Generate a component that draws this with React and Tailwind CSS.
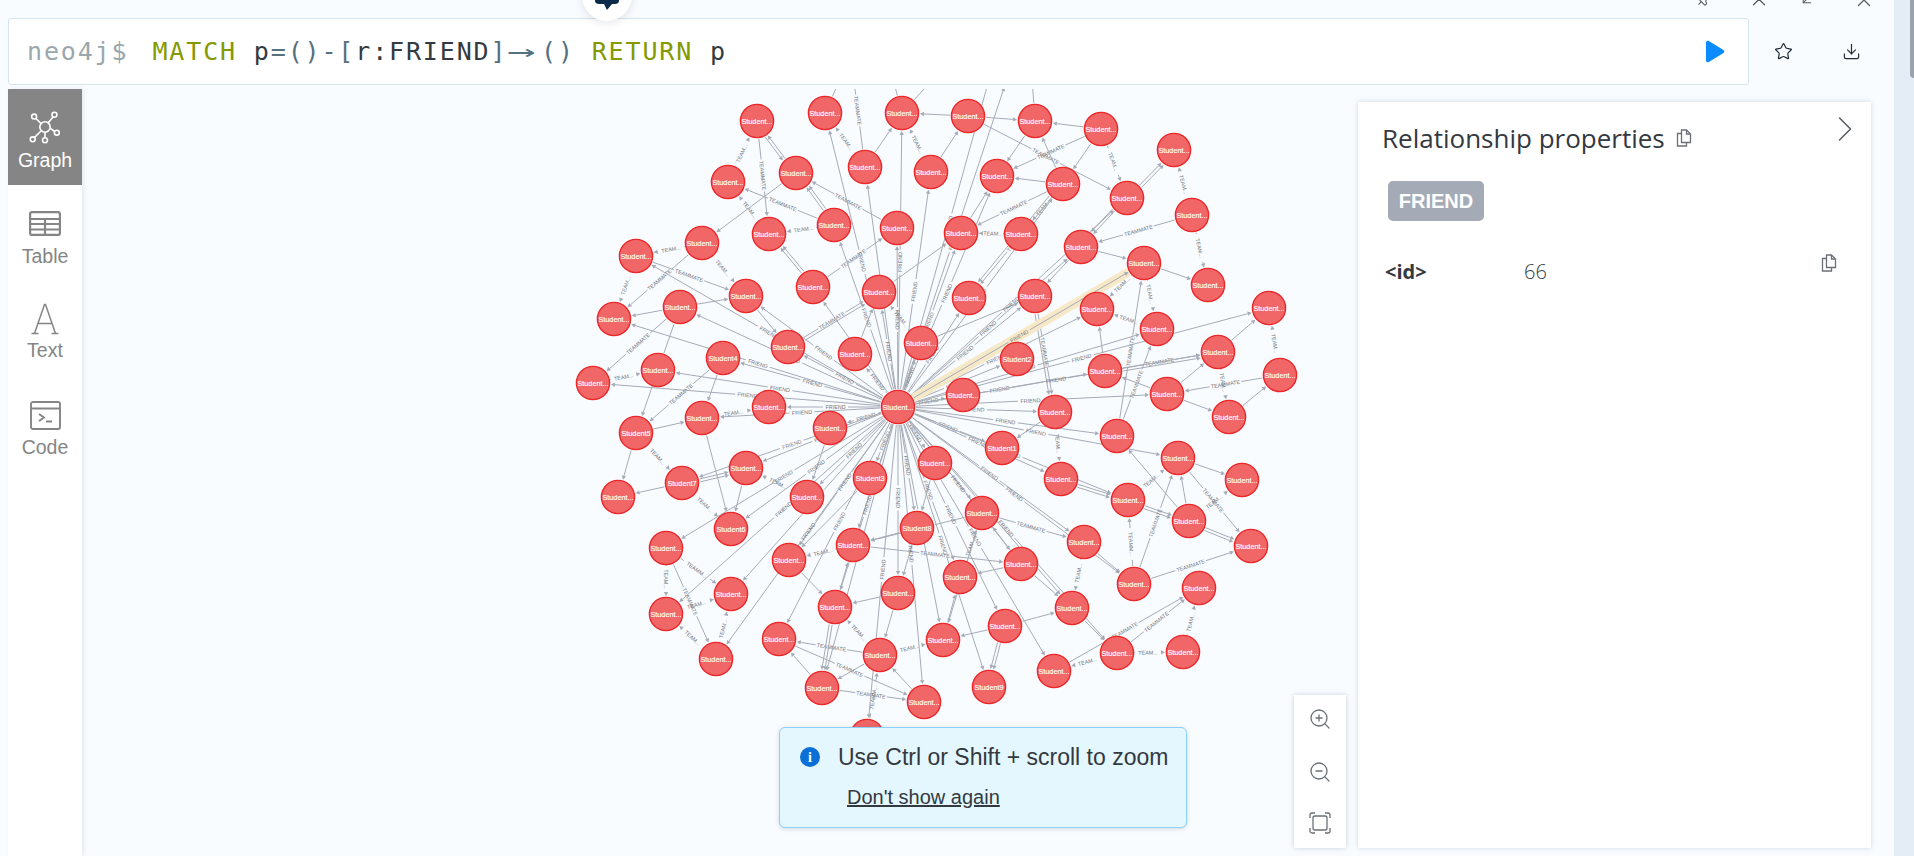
import { Star, Download, ZoomIn, ZoomOut, ChevronRight, ChevronUp, X, Pin, ArrowDownLeft } from "lucide-react";

// node centres in page pixels, [x, y, caption]
const NODES = [
  [898, 407], [757, 121], [825, 113], [902, 113], [968, 116], [1035, 121], [1101, 129], [1174, 150],
  [728, 182], [796, 173], [865, 167], [931, 172], [997, 176], [1063, 184], [1127, 198], [1192, 215],
  [769, 234], [834, 225], [897, 228], [961, 233], [1021, 234], [1081, 247], [1144, 263], [1208, 285],
  [636, 256], [702, 243], [746, 296], [813, 287], [879, 292], [969, 298], [1035, 296], [1097, 309],
  [1157, 329], [1269, 308], [614, 319], [680, 307], [788, 347], [855, 354], [921, 343], [963, 395],
  [593, 383], [658, 370], [723, 358, "Student4"], [769, 407], [702, 418], [830, 428], [636, 433, "Student5"],
  [1017, 359, "Student2"], [1218, 352], [1105, 371], [1280, 375], [1167, 394], [1229, 417], [1055, 412],
  [1117, 436], [746, 468], [682, 483, "Student7"], [618, 497], [807, 497], [870, 478, "Student3"], [935, 463],
  [731, 529, "Student6"], [917, 528, "Student8"], [666, 548], [789, 560], [853, 545], [960, 577], [731, 594],
  [898, 593], [835, 607], [666, 614], [779, 639], [943, 640], [716, 659], [880, 655], [822, 688], [924, 702],
  [867, 736], [1002, 448, "Student1"], [1178, 458], [1242, 480], [1061, 479], [1128, 500], [1189, 521],
  [1251, 546], [982, 513], [1084, 542], [1021, 564], [1134, 584], [1199, 588], [1072, 608], [1005, 626],
  [1117, 653], [1183, 652], [1054, 671], [989, 687, "Student9"],
  // above the fold, only their edges show
  [850, 50], [862, 30], [960, 50], [880, 30], [1030, 50], [1000, 40], [1010, 70],
];

const HUB_EDGES = [
  2, 3, 10, 11, 12, 17, 18, 19, 13, 14, 21, 26, 24, 27, 28, 29, 30, 31, 36, 37, 38, 35, 34, 40, 41, 42, 43, 44,
  45, 39, 47, 49, 53, 51, 78, 81, 82, 54, 79, 33, 32, 48, 55, 56, 58, 59, 60, 61, 62, 63, 64, 65, 66, 67, 68, 69,
  70, 71, 72, 73, 75, 76, 85, 86, 87, 88, 90, 91, 92, 94, 95, 77, 102, 101,
];

// [from, to, offset]: an edge with an offset has no caption drawn
const TEAM_EDGES = [
  [8, 1], [1, 16], [9, 1, 0], [1, 9, 3], [17, 9, 0], [17, 9, 3], [17, 8], [16, 8], [9, 25, 0], [17, 16], [18, 9],
  [10, 2], [10, 3, 0], [11, 3], [4, 3, 0], [10, 96], [2, 97, 0], [3, 98, 0], [3, 99, 0], [5, 100, 0], [11, 4, 0],
  [25, 24], [24, 34], [25, 34], [24, 26], [25, 26], [35, 26, 0], [35, 34, 0], [35, 46], [35, 40], [40, 41],
  [42, 44, 0], [42, 46], [44, 43], [46, 44, 0], [36, 28], [27, 18], [27, 16, 0], [27, 16, 3], [26, 36, 0],
  [36, 28, 3], [28, 19, 0], [37, 28, 0], [38, 28], [38, 30, 0], [4, 5, 0], [6, 5, 0], [6, 13, 0], [4, 14], [6, 14],
  [6, 12], [13, 5, 0], [5, 12, 0], [14, 7, 0], [14, 7, 3], [15, 7], [15, 21], [15, 23], [22, 23, 0], [21, 22, 0],
  [22, 31], [22, 32], [32, 31], [13, 19], [13, 20], [19, 12, 0], [13, 12, 0], [13, 29], [13, 29, 3], [20, 19],
  [14, 21, 0], [14, 21, 3], [21, 30, 0], [49, 31, 0], [54, 22], [54, 32], [49, 48], [49, 48, 3], [51, 48, 0],
  [48, 52], [48, 33, 0], [50, 33], [50, 51], [52, 50, 0], [30, 53], [30, 53, 3], [51, 49, 0], [51, 52, 0],
  [53, 78, 0], [53, 81], [81, 82, 0], [81, 82, 3], [82, 83, 0], [82, 83, 3], [83, 84, 0], [83, 84, 3], [79, 80, 0],
  [82, 79], [79, 84], [83, 79, 0], [83, 80], [83, 54, 0], [88, 82], [88, 79], [88, 84], [86, 88, 0], [86, 90],
  [85, 86], [87, 90, 0], [91, 90, 0], [90, 92, 0], [92, 94], [92, 93], [93, 89], [94, 89], [92, 89], [91, 95, 0],
  [91, 95, 3], [87, 85, 0], [46, 57, 0], [46, 56], [56, 57, 0], [56, 55, 0], [56, 55, 3], [56, 61], [55, 61, 0],
  [44, 61, 0], [58, 55], [45, 58, 0], [63, 67], [63, 70], [63, 73], [70, 67], [73, 67], [73, 70], [74, 71], [75, 71, 0],
  [74, 75, 0], [74, 69], [69, 65, 0], [65, 64], [62, 65, 0], [75, 76], [71, 76], [77, 74], [74, 72], [76, 74, 0],
  [69, 75, 0], [69, 75, 3], [85, 72, 0], [87, 66, 0], [66, 85], [72, 66, 0], [91, 72, 0], [85, 65], [65, 87],
  [64, 69, 0], [68, 69, 0], [68, 74, 0], [59, 64, 0], [60, 62, 0], [62, 68, 0],
];

const teamLabel = (len) => {
  if (len < 75) return "TEAM...";
  if (len < 85) return "TEAMM...";
  return "TEAMMATE";
};

// trims a line to the node rims, leaves a gap for the caption, adds the arrow
const Edge = ({ from, to, offset = 0, label, highlight }) => {
  const [x1, y1] = NODES[from];
  const [x2, y2] = NODES[to];
  const len = Math.hypot(x2 - x1, y2 - y1);
  const ux = (x2 - x1) / len;
  const uy = (y2 - y1) / len;
  const nx = -uy * offset;
  const ny = ux * offset;
  const sx = x1 + ux * 18 + nx;
  const sy = y1 + uy * 18 + ny;
  const ex = x2 - ux * 22 + nx;
  const ey = y2 - uy * 22 + ny;
  const tipX = x2 - ux * 18 + nx;
  const tipY = y2 - uy * 18 + ny;
  const mx = (sx + ex) / 2;
  const my = (sy + ey) / 2;
  const gap = label ? label.length * 1.75 + 2 : 0;
  let angle = (Math.atan2(uy, ux) * 180) / Math.PI;
  if (angle > 90) angle -= 180;
  if (angle < -90) angle += 180;

  return (
    <g>
      {highlight && (
        <line x1={sx} y1={sy} x2={tipX} y2={tipY} stroke="#f7e9c8" strokeWidth="9" />
      )}
      <line x1={sx} y1={sy} x2={mx - ux * gap} y2={my - uy * gap} stroke="#a5abb6" strokeWidth="1" />
      <line x1={mx + ux * gap} y1={my + uy * gap} x2={ex} y2={ey} stroke="#a5abb6" strokeWidth="1" />
      <polygon
        points={`${tipX},${tipY} ${ex - uy * 2.2},${ey + ux * 2.2} ${ex + uy * 2.2},${ey - ux * 2.2}`}
        fill="#a5abb6"
      />
      {label && (
        <text
          x={mx}
          y={my}
          transform={`rotate(${angle} ${mx} ${my})`}
          textAnchor="middle"
          dominantBaseline="central"
          fontSize="5.4"
          fill="#6f747c"
          fontFamily="'Liberation Sans', sans-serif"
        >
          {label}
        </text>
      )}
    </g>
  );
};

const GraphCanvas = () => {
  const nodes = NODES.slice(0, 96);
  return (
    <svg className="absolute inset-0 w-full h-full">
      <g transform="translate(-82 -89)">
        {TEAM_EDGES.map(([a, b, offset], idx) => {
          const len = Math.hypot(NODES[a][0] - NODES[b][0], NODES[a][1] - NODES[b][1]);
          return (
            <Edge
              key={`t${idx}`}
              from={a}
              to={b}
              offset={offset}
              label={offset === undefined ? teamLabel(len) : undefined}
            />
          );
        })}
        {HUB_EDGES.map((target) => (
          <Edge key={`h${target}`} from={0} to={target} label="FRIEND" />
        ))}
        <Edge from={0} to={22} label="FRIEND" highlight />
        {nodes.map(([x, y, caption], idx) => (
          <g key={idx}>
            <circle cx={x} cy={y} r="16.6" fill="#f16667" stroke="#eb2728" strokeWidth="1.4" />
            <text
              x={x}
              y={y}
              textAnchor="middle"
              dominantBaseline="central"
              fontSize="7.3"
              fill="#ffffff"
              stroke="#ffffff"
              strokeWidth="0.15"
              fontFamily="'Liberation Sans', sans-serif"
            >
              {caption || "Student..."}
            </text>
          </g>
        ))}
      </g>
    </svg>
  );
};

const GraphIcon = () => (
  <svg width="34" height="34" viewBox="0 0 36 36" fill="none" stroke="#ffffff" strokeWidth="1.7">
    <circle cx="18" cy="18" r="5.5" />
    <circle cx="6.5" cy="7" r="2.6" />
    <circle cx="28" cy="5" r="2.6" />
    <circle cx="30.5" cy="24" r="2.6" />
    <circle cx="5" cy="31" r="2.6" />
    <circle cx="18" cy="32" r="2.6" />
    <path d="M8.500 9l5.500 5.500M26.500 7.500l-5.500 6.500M23.500 19.500l4.500 3M14 22l-7 7M18 23.500v6" />
  </svg>
);

const TableIcon = () => (
  <svg width="32" height="25" viewBox="0 0 32 25" fill="none" stroke="#858585" strokeWidth="2.2">
    <rect x="1.100" y="1.100" width="29.800" height="22.800" rx="2" />
    <path d="M1 8h30M1 13h30M1 18.500h30M16 8v16" />
  </svg>
);

const TextIcon = () => (
  <svg width="28" height="32" viewBox="0 0 28 32" fill="none" stroke="#858585" strokeWidth="1.5">
    <path d="M3.500 30.500L13.500 1.500h1L24.500 30.500M7 20.500h14M0.500 30.500h7M20.500 30.500h7" />
  </svg>
);

const CodeIcon = () => (
  <svg width="31" height="29" viewBox="0 0 31 29" fill="none" stroke="#858585" strokeWidth="1.9">
    <rect x="1" y="1" width="29" height="27" rx="2" />
    <path d="M1 7.500h29M9 13l5 3.500-5 3.500M16 20.500h6" />
  </svg>
);

const CopyIcon = () => (
  <svg width="16" height="18" viewBox="0 0 16 18" fill="none" stroke="#6b7077" strokeWidth="1.3">
    <path d="M5.500 1h5l4 4v8.500h-9z" />
    <path d="M10.500 1v4h4" />
    <path d="M5.500 4.500H1.500V17h9v-3.500" />
  </svg>
);

const FitIcon = () => (
  <svg width="22" height="22" viewBox="0 0 22 22" fill="none" stroke="#6b7077" strokeWidth="1.3">
    <rect x="4" y="4" width="14" height="14" rx="2" />
    <path d="M1 6V3a2 2 0 012-2h3M16 1h3a2 2 0 012 2v3M21 16v3a2 2 0 01-2 2h-3M6 21H3a2 2 0 01-2-2v-3" />
  </svg>
);

const SIDE_TABS = [
  { label: "Graph", icon: <GraphIcon />, labelClass: "mt-[5px]", active: true },
  { label: "Table", icon: <TableIcon />, labelClass: "mt-[5px]" },
  { label: "Text", icon: <TextIcon />, labelClass: "mt-[3px]" },
  { label: "Code", icon: <CodeIcon />, labelClass: "mt-[4px]" },
];

const App = () => {
  return (
    <div className="relative flex h-[856px] w-full overflow-hidden bg-[#f9fcff] font-['Liberation_Sans',sans-serif]">
      <div className="flex min-w-0 flex-1 flex-col">
        <div className="flex h-[89px] shrink-0 items-start pt-[18px] pl-2">
          <div className="flex h-[67px] w-[1741px] items-center justify-between rounded-[3px] border border-[#d6e4f0] bg-white pr-[23px] pl-[18px]">
            <div className="font-['DejaVu_Sans_Mono',monospace] text-[25px] tracking-[1.85px] whitespace-pre text-[#333a40]">
              <span className="text-[#9aa7ad]">neo4j$</span>
              <span className="ml-[24px] text-[#859900]">MATCH</span> p
              <span className="text-[#55707f]">=()-[</span>r:FRIEND
              <span className="text-[#55707f]">]</span>
              <span className="inline-block w-[33.6px] origin-left scale-x-[1.9] text-[#55707f]">→</span>
              <span className="text-[#55707f]">()</span>{" "}
              <span className="text-[#859900]">RETURN</span> p
            </div>
            <svg width="20" height="23" viewBox="0 0 20 23">
              <path d="M1 2.500C1 1 2.500.4 3.800 1.100L18.500 10c1 .6 1 2.400 0 3L3.800 21.900C2.500 22.600 1 22 1 20.500z" fill="#0a8bff" />
            </svg>
          </div>
          <div className="ml-[17px] flex h-[67px] w-[34px] shrink-0 items-center justify-center">
            <Star size={19} strokeWidth={1.5} className="text-[#222b33]" />
          </div>
          <div className="ml-[34px] flex h-[67px] w-[34px] shrink-0 items-center justify-center">
            <Download size={19} strokeWidth={1.5} className="text-[#222b33]" />
          </div>
        </div>

        <div className="flex min-h-0 flex-1">
          <div className="ml-2 w-[74px] shrink-0 bg-white shadow-[2px_0_4px_rgba(120,140,170,0.15)]">
            {SIDE_TABS.map((tab) => (
              <div
                key={tab.label}
                className={`flex h-24 flex-col items-center pt-[22px] ${
                  tab.active ? "bg-[#858585] text-white" : "text-[#858585]"
                }`}
              >
                <div className="flex h-8 items-center justify-center">{tab.icon}</div>
                <span className={`${tab.labelClass} text-[19.5px] leading-6`}>{tab.label}</span>
              </div>
            ))}
          </div>

          <div className="relative min-w-0 flex-1 overflow-hidden">
            <GraphCanvas />
            <div className="absolute top-[606px] left-[1212px] flex h-[153px] w-[52px] flex-col items-center justify-between bg-white pt-[12px] pb-[14px] shadow-[0_0_5px_rgba(90,110,150,0.3)]">
              <ZoomIn size={24} strokeWidth={1.3} className="text-[#6b7077]" />
              <ZoomOut size={24} strokeWidth={1.3} className="text-[#6b7077]" />
              <FitIcon />
            </div>
            <div className="absolute top-[638px] left-[697px] h-[101px] w-[408px] rounded-md border border-[#8dd0f8] bg-[#e4f7ff] pt-[15px] pl-[20px] text-[#33393f] shadow-[0_1px_4px_rgba(90,110,150,0.25)]">
              <div className="flex items-center">
                <span className="flex h-5 w-5 items-center justify-center rounded-full bg-[#0b6fd6] font-['Liberation_Serif',serif] text-[14px] font-bold text-white">
                  i
                </span>
                <span className="ml-[18px] text-[23px] leading-7">Use Ctrl or Shift + scroll to zoom</span>
              </div>
              <div className="mt-[14px] ml-[47px] text-[20px] leading-6 underline">Don't show again</div>
            </div>
          </div>

          <div className="mt-[13px] mr-[23px] mb-2 w-[513px] shrink-0 bg-white px-[24px] font-['Open_Sans',sans-serif] text-[#33393f] shadow-[0_0_5px_rgba(90,110,150,0.25)]">
            <div className="flex h-[50px] items-center justify-between pt-[11px]">
              <div className="flex items-center gap-[11px] pt-[10px]">
                <span className="text-[26px] leading-[36px]">Relationship properties</span>
                <CopyIcon />
              </div>
              <ChevronRight size={44} strokeWidth={0.8} className="-mt-[8px] -mr-[20px] shrink-0 text-[#55595f]" />
            </div>
            <div className="mt-[29px] ml-[6px] flex h-10 w-24 items-center justify-center rounded-[5px] bg-[#a5abb6] font-['Liberation_Sans',sans-serif] text-[20px] font-bold text-white">
              FRIEND
            </div>
            <div className="mt-[35px] flex items-start">
              <span className="ml-[3px] w-[139px] text-[20px] leading-[32px] font-bold">&lt;id&gt;</span>
              <span className="text-[20px] leading-[32px] font-light">66</span>
              <span className="-mt-[2px] mr-[10px] ml-auto">
                <CopyIcon />
              </span>
            </div>
          </div>
        </div>
      </div>

      <div className="relative w-5 shrink-0 bg-[#e4ecf5]">
        <div className="absolute top-0 right-0 h-[78px] w-1 rounded-bl bg-[#9aa3ad]" />
      </div>

      {/* window buttons, cut off by the page top */}
      <Pin size={18} strokeWidth={1.4} className="absolute -top-[10px] left-[1695px] rotate-45 text-[#555b62]" />
      <ChevronUp size={22} strokeWidth={1.4} className="absolute -top-[9px] left-[1748px] text-[#555b62]" />
      <ArrowDownLeft size={18} strokeWidth={1.4} className="absolute -top-[10px] left-[1798px] text-[#555b62]" />
      <X size={22} strokeWidth={1.4} className="absolute -top-[11px] left-[1853px] text-[#555b62]" />

      <div className="absolute -top-[29px] left-[582px] flex h-[50px] w-[50px] items-end justify-center rounded-full bg-white shadow-[0_2px_8px_rgba(60,80,110,0.15)]">
        <svg width="24" height="14" viewBox="0 0 24 14" className="mb-[11px]">
          <path d="M0 0h24v5c0 2-2 3-4 3h-3l-5 6-3-6H4C2 8 0 7 0 5z" fill="#0c2a4a" />
        </svg>
      </div>
    </div>
  );
};

export default App;
